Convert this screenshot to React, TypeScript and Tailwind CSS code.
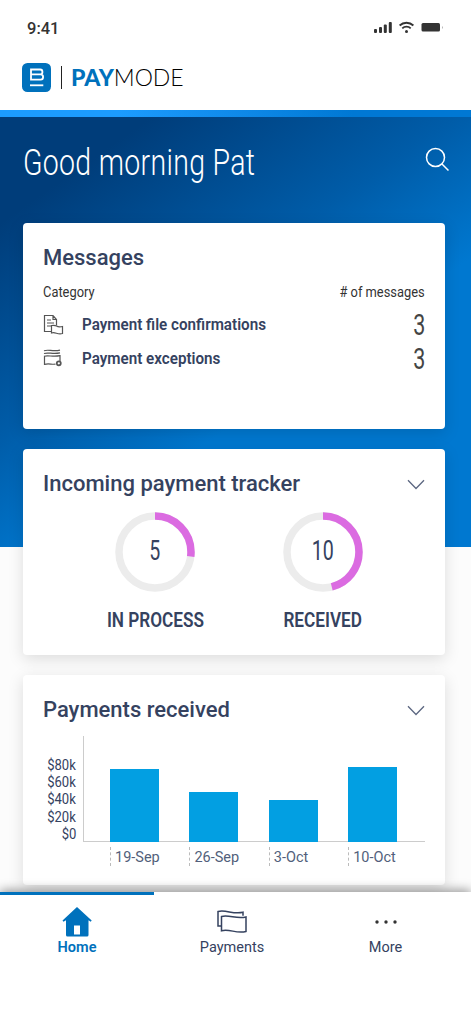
import type { ReactNode } from "react";

const rings = [
  { label: "IN PROCESS", value: 5, share: 0.27 },
  { label: "RECEIVED", value: 10, share: 0.46 },
];

const bars = [
  { label: "19-Sep", height: 73 },
  { label: "26-Sep", height: 50 },
  { label: "3-Oct", height: 42 },
  { label: "10-Oct", height: 75 },
];

const ticks = ["$80k", "$60k", "$40k", "$20k", "$0"];

function Card({ className, children }: { className: string; children: ReactNode }) {
  return (
    <section className={`rounded-[4px] bg-white px-5 shadow-[0_4px_16px_rgba(0,0,0,0.13)] ${className}`}>
      {children}
    </section>
  );
}

function Chevron() {
  return (
    <svg width="18" height="11" viewBox="0 0 18 11" fill="none" stroke="#5c6781" strokeWidth="1.3">
      <path d="M1 1.2 9 9.5 17 1.2" />
    </svg>
  );
}

function StatusBar() {
  return (
    <div className="flex h-[55px] items-center justify-between px-[27px] text-[#333]">
      <span className="mt-[2px] text-[16.5px] font-medium leading-5">9:41</span>
      <svg width="70" height="14" viewBox="0 0 70 14" fill="none">
        <g fill="#333">
          <rect x="0" y="8" width="3" height="4" rx="1" />
          <rect x="5" y="6" width="3" height="6" rx="1" />
          <rect x="9.8" y="3.5" width="3" height="8.5" rx="1" />
          <rect x="14.8" y="1" width="3" height="11" rx="1" />
          <rect x="47.5" y="2" width="18.5" height="8.5" rx="1.5" />
          <circle cx="32.5" cy="10.4" r="1.5" />
        </g>
        <g stroke="#333" strokeWidth="1.8">
          <path d="M25.6 4.5a10 10 0 0 1 13.8 0" />
          <path d="M28.3 7.4a6 6 0 0 1 8.4 0" />
        </g>
        <rect x="68" y="5.5" width="1" height="2" fill="#bbb" />
      </svg>
    </div>
  );
}

function Brand() {
  return (
    <div className="flex h-[45px] items-center pl-[22px]">
      <svg width="29" height="29" viewBox="0 0 29 29" fill="none">
        <rect width="29" height="29" rx="5.5" fill="#0071bc" />
        <g stroke="#fff" strokeWidth="1.8">
          <path d="M9 6.5h9.200c3 0 3 4.900 0 4.900H9h9.700c3.200 0 3.200 5.300 0 5.300H9V6.500Z" />
          <path d="M8 22.300h13.300" />
        </g>
      </svg>
      <span className="ml-[10px] h-[23px] w-px bg-[#222]" />
      <span className="mb-[2px] ml-[9px] flex font-['Lato'] text-[23px] leading-7 text-black">
        <span className="font-black text-[#0071bc]">PAY</span>
        <span className="font-light">MODE</span>
      </span>
    </div>
  );
}

function MessageRow({ icon, label, count }: { icon: ReactNode; label: string; count: number }) {
  return (
    <div className="flex h-[34px] items-center">
      <svg width="22" height="22" viewBox="0 0 22 22" fill="none" stroke="#555" strokeWidth="1.2">
        {icon}
      </svg>
      <span className="ml-[17px] origin-left scale-x-[0.88] text-[17.3px] font-semibold whitespace-nowrap">{label}</span>
      <span className="mt-px ml-auto origin-right scale-x-[0.74] text-[29px] font-normal text-[#444]">{count}</span>
    </div>
  );
}

function Ring({ value, share, label }: { value: number; share: number; label: string }) {
  const length = 2 * Math.PI * 36;
  return (
    <div className="flex w-[168px] flex-col items-center">
      <div className="grid size-20 place-items-center">
        <svg className="col-start-1 row-start-1" width="80" height="80" viewBox="0 0 80 80" fill="none" strokeWidth="7.5">
          <circle cx="40" cy="40" r="36" stroke="#ececec" />
          <circle
            cx="40"
            cy="40"
            r="36"
            stroke="#db6be1"
            strokeDasharray={`${length * share} ${length}`}
            transform="rotate(-90 40 40)"
          />
        </svg>
        <span className="col-start-1 row-start-1 -mt-0.5 scale-x-[0.7] text-[28px] font-normal leading-8">{value}</span>
      </div>
      <span className="mt-4 scale-x-[0.86] text-[20px] font-semibold leading-6 whitespace-nowrap">{label}</span>
    </div>
  );
}

export default function App() {
  return (
    <div className="flex h-[1020px] w-[471px] flex-col overflow-hidden bg-white font-['Roboto',sans-serif] text-[#35425f]">
      <header className="h-[110px] shrink-0">
        <StatusBar />
        <Brand />
      </header>
      <div className="h-[7px] shrink-0 bg-linear-to-r from-[#1c9cff] from-25% to-[#0078d4] to-75%" />

      <main className="h-[775px] shrink-0 overflow-hidden bg-[#fcfcfc] bg-[linear-gradient(145deg,#003d7a_14%,#005ca8_42%,#0078d0_62%)] bg-[length:100%_430px] bg-no-repeat pr-[26px] pl-[23px]">
        <div className="flex h-[106px] items-start justify-between text-white">
          <h1 className="mt-[24px] origin-left scale-x-[0.77] text-[37px] font-light leading-[44px] tracking-[0.4px] whitespace-nowrap">
            Good morning Pat
          </h1>
          <svg className="mt-[30px] -mr-[5px]" width="25" height="25" viewBox="0 0 25 25" fill="none" stroke="#fff" strokeWidth="1.5">
            <circle cx="10.5" cy="10.5" r="9" />
            <path d="m17 17 6.500 6.500" />
          </svg>
        </div>

        <Card className="h-[206px] pt-[21px]">
          <h2 className="text-[22px] font-medium leading-7">Messages</h2>
          <div className="mt-[10px] flex justify-between text-[14px] leading-5 text-[#333]">
            <span className="origin-left scale-x-[0.92]">Category</span>
            <span className="origin-right scale-x-[0.92]"># of messages</span>
          </div>
          <div className="mt-[6px]">
            <MessageRow
              label="Payment file confirmations"
              count={3}
              icon={
                <>
                  <path d="M8.500 17.500H1.500V1.500h8.500l3.500 4v6M10 1.500v4h3.500M4 6h4M4 9h7M4 12h4.500" />
                  <path d="M8.500 11.500v7.500c4-1.500 6 2.200 11 .5v-7c-3 .6-4.500.5-6-.5-1.700-1-3.500-.7-5-.5Z" />
                </>
              }
            />
            <MessageRow
              label="Payment exceptions"
              count={3}
              icon={
                <>
                  <path d="M1 2.700c4-1.500 9 1 16-.6M1 5.500c4-1.500 9 1 16-.6M1 8.300c4-1.500 9 1 16-.6v5.500M1.500 8.300v8c5-1.200 7 .5 11-.2" />
                  <circle cx="15.800" cy="15.300" r="2" strokeWidth="1.700" />
                </>
              }
            />
          </div>
        </Card>

        <Card className="mt-5 h-[206px] pt-[21px]">
          <div className="flex items-center justify-between">
            <h2 className="text-[22px] font-medium leading-7">Incoming payment tracker</h2>
            <Chevron />
          </div>
          <div className="mt-[14px] ml-[28px] flex">
            {rings.map((ring) => (
              <Ring key={ring.label} {...ring} />
            ))}
          </div>
        </Card>

        <Card className="mt-5 h-[210px] pt-[21px]">
          <div className="flex items-center justify-between">
            <h2 className="text-[22px] font-medium leading-7">Payments received</h2>
            <Chevron />
          </div>
          <div className="mt-[12px] flex h-[106px]">
            <div className="-mb-px flex w-[33px] flex-col items-end justify-end text-[14.5px] leading-[17.2px]">
              {ticks.map((tick) => (
                <span key={tick} className="origin-right scale-x-[0.9]">{tick}</span>
              ))}
            </div>
            <div className="ml-[7px] flex flex-1 items-end gap-[30.4px] border-b border-l border-[#ccc] pl-[26px]">
              {bars.map((bar) => (
                <div key={bar.label} className="-mb-px w-[49px] bg-[#029fe2]" style={{ height: bar.height }} />
              ))}
            </div>
          </div>
          <div className="mt-[5px] ml-[67px] flex gap-[30.4px]">
            {bars.map((bar) => (
              <span key={bar.label} className="w-[49px] border-l border-dashed border-[#bbb] pt-[2px] pl-[4px] text-[14.5px] leading-[17px] whitespace-nowrap text-[#525f7b]">
                {bar.label}
              </span>
            ))}
          </div>
        </Card>
      </main>

      {/* bottom tabs, the active one carries the blue line */}
      <nav className="z-10 mt-0 grid grow grid-cols-[154px_156px_151px] bg-white text-center text-[14.5px] shadow-[0_-2px_10px_rgba(0,0,0,0.4)]">
        <div className="flex flex-col items-center border-t-[3px] border-[#0071bc] pt-[12px] font-semibold text-[#0071bc]">
          <svg width="30" height="30" viewBox="0 0 30 30" fill="currentColor">
            <path fillRule="evenodd" d="M15 0 29.700 13.500l-1 1.200-2.200-1.500V28a1.500 1.500 0 0 1-1.500 1.500H5.500A1.500 1.500 0 0 1 4 28V13.200l-2.500 1.500-1-1.200L15 0ZM12 18.500v9h6v-9h-6Z" />
          </svg>
          <span className="mt-px leading-5">Home</span>
        </div>
        <div className="flex flex-col items-center pt-[18px]">
          <svg width="30" height="24" viewBox="0 0 30 24" fill="none" stroke="#35425f" strokeWidth="1.5">
            <path d="M4 16H1V1.500c8-2 15 3 25 .8v3.500" />
            <path d="M4.500 6.500c8-2 15 3 24.500.5v14.500c-10 2.500-16-3-24.500-.8v-14.200Z" />
          </svg>
          <span className="mt-1 leading-5">Payments</span>
        </div>
        <div className="flex flex-col items-center pt-[18px]">
          <svg width="22" height="24" viewBox="0 0 22 24" fill="#333">
            <circle cx="2" cy="12" r="1.7" />
            <circle cx="11" cy="12" r="1.7" />
            <circle cx="20" cy="12" r="1.7" />
          </svg>
          <span className="mt-1 leading-5">More</span>
        </div>
      </nav>
    </div>
  );
}
